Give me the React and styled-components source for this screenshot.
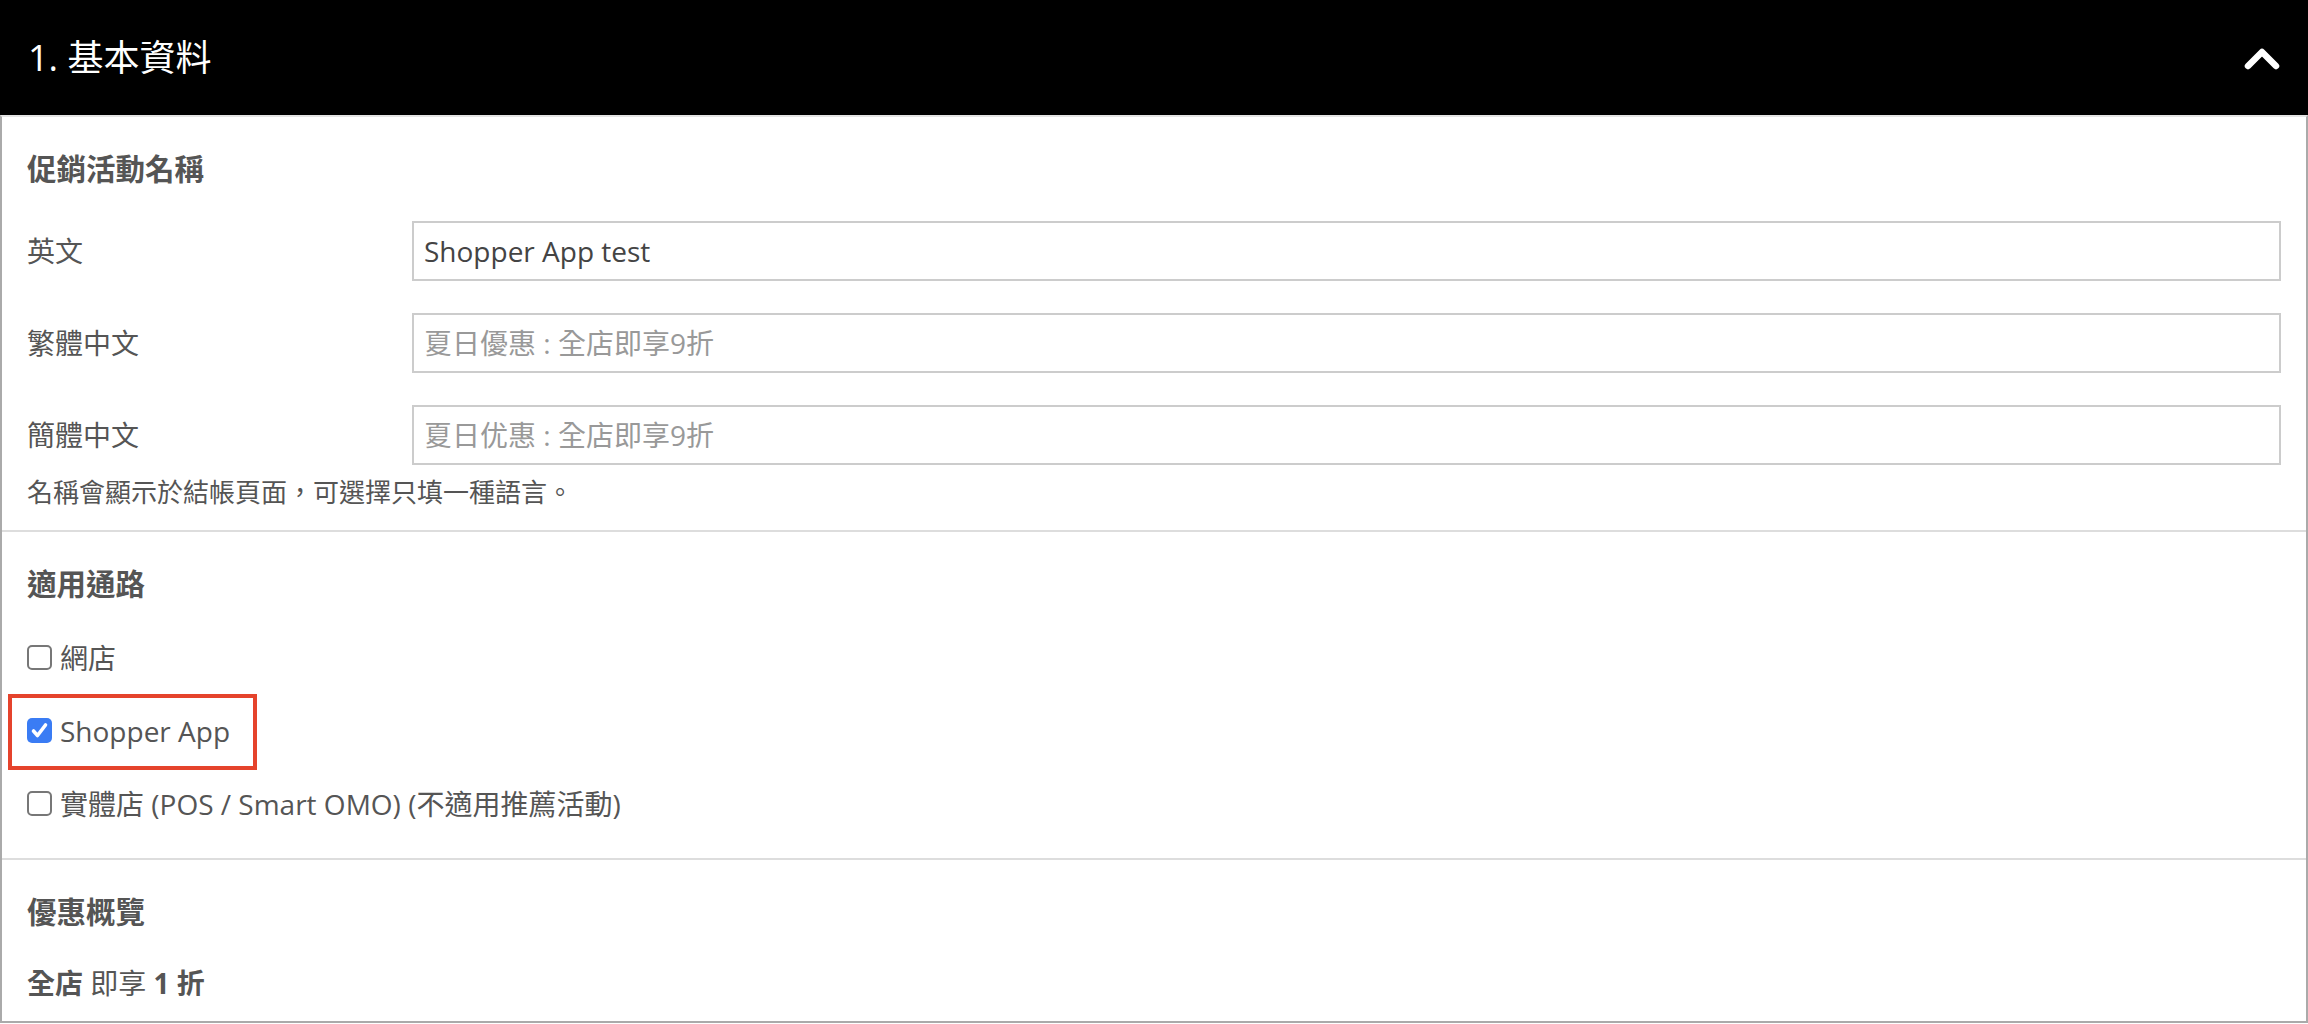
import React from 'react'
import styled, { createGlobalStyle, css } from 'styled-components'

const GlobalStyle = createGlobalStyle`
  body {
    margin: 0;
    background: #fff;
    font-family: "Open Sans", "Noto Sans CJK TC", sans-serif;
  }
`

const Panel = styled.div`
  width: 2308px;
`

const Header = styled.div`
  height: 115px;
  background: #000;
  display: flex;
  align-items: center;
  justify-content: space-between;
  padding: 0 28px;
  box-sizing: border-box;
`

const HeaderTitle = styled.h2`
  margin: 0;
  color: #fff;
  font-size: 36px;
  font-weight: 400;
  line-height: 48px;
`

const Body = styled.div`
  border: 2px solid #aaa;
  border-top: 2px solid #e4e4e4;
`

const Section = styled.div`
  padding: 32px 25px 18px;
  border-bottom: 2px solid #ddd;
  color: #555;
  font-size: 28px;
  line-height: 40px;
  &:last-child {
    border-bottom: none;
  }
`

const SectionTitle = styled.div`
  font-weight: 700;
  font-size: 29.5px;
  color: #555;
`

const FieldRow = styled.div`
  display: grid;
  grid-template-columns: 385px 1fr;
  align-items: center;
  margin-top: 32px;
`

const FieldLabel = styled.label`
  color: #555;
`

const TextInput = styled.input`
  height: 60px;
  box-sizing: border-box;
  border: 2px solid #ccc;
  border-radius: 0;
  padding: 0 10px;
  font-family: inherit;
  font-size: 28px;
  color: #444;
  outline: none;
  &::placeholder {
    color: #999;
  }
`

const Hint = styled.div`
  margin-top: 7px;
  font-size: 26px;
`

const Summary = styled.div`
  margin-top: 31px;
`

const CheckList = styled.div`
  margin-top: 17px;
  display: flex;
  flex-direction: column;
  align-items: flex-start;
`

const CheckRow = styled.label`
  position: relative;
  display: inline-flex;
  align-items: center;
  gap: 8px;
  height: 73px;
  color: #555;
  ${({ highlighted }) =>
    highlighted &&
    css`
      &::after {
        content: '';
        position: absolute;
        top: 0;
        bottom: -3px;
        left: -19px;
        right: -27px;
        border: 4px solid #e5432c;
      }
    `}
`

const Box = styled.span`
  width: 25px;
  height: 25px;
  box-sizing: border-box;
  border-radius: 5px;
  display: flex;
  align-items: center;
  justify-content: center;
  flex-shrink: 0;
  ${({ checked }) =>
    checked
      ? css`
          background: #3a7cf4;
          border: none;
        `
      : css`
          background: #fff;
          border: 2px solid #777;
        `}
`

const Bold = styled.b`
  font-weight: 700;
`

const Chevron = () => (
  <svg width="36" height="24" viewBox="0 0 36 24">
    <polyline
      points="4,20 18,6 32,20"
      fill="none"
      stroke="#fff"
      strokeWidth="6.5"
      strokeLinecap="round"
      strokeLinejoin="round"
    />
  </svg>
)

const Checkbox = ({ checked }) => (
  <Box checked={checked}>
    {checked && (
      <svg width="25" height="25" viewBox="0 0 25 25">
        <path d="M6.5 13 L10.5 17.5 L18.5 7" fill="none" stroke="#fff" strokeWidth="3.6" strokeLinecap="round" strokeLinejoin="round" />
      </svg>
    )}
  </Box>
)

const fields = [
  { label: '英文', value: 'Shopper App test', placeholder: '' },
  { label: '繁體中文', value: '', placeholder: '夏日優惠 : 全店即享9折' },
  { label: '簡體中文', value: '', placeholder: '夏日优惠 : 全店即享9折' },
]

const channels = [
  { label: '網店', checked: false },
  { label: 'Shopper App', checked: true, highlighted: true },
  { label: '實體店 (POS / Smart OMO) (不適用推薦活動)', checked: false },
]

export default function App() {
  return (
    <Panel>
      <GlobalStyle />
      <Header>
        <HeaderTitle>1. 基本資料</HeaderTitle>
        <Chevron />
      </Header>
      <Body>
        <Section>
          <SectionTitle>促銷活動名稱</SectionTitle>
          {fields.map((f) => (
            <FieldRow key={f.label}>
              <FieldLabel>{f.label}</FieldLabel>
              <TextInput defaultValue={f.value} placeholder={f.placeholder} />
            </FieldRow>
          ))}
          <Hint>名稱會顯示於結帳頁面，可選擇只填一種語言。</Hint>
        </Section>
        <Section>
          <SectionTitle>適用通路</SectionTitle>
          <CheckList>
            {channels.map((c) => (
              <CheckRow key={c.label} highlighted={c.highlighted}>
                <Checkbox checked={c.checked} />
                {c.label}
              </CheckRow>
            ))}
          </CheckList>
        </Section>
        <Section>
          <SectionTitle>優惠概覽</SectionTitle>
          <Summary>
            <Bold>全店</Bold> 即享 <Bold>1 折</Bold>
          </Summary>
        </Section>
      </Body>
    </Panel>
  )
}
